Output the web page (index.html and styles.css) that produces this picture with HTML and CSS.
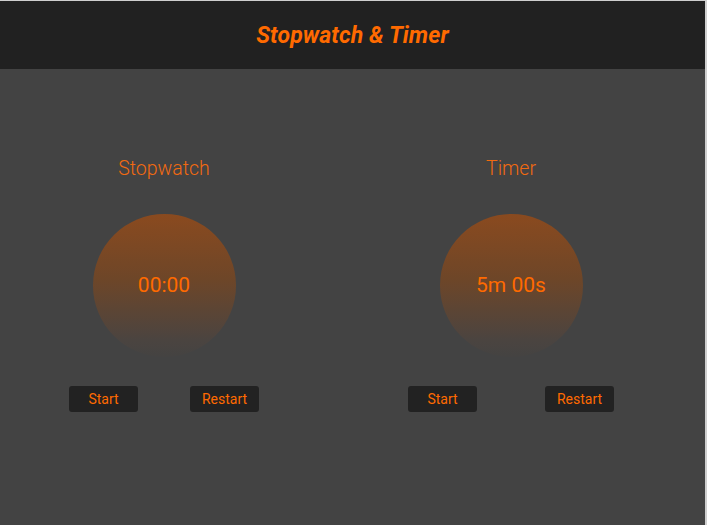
FILE: index.html
```html
<!DOCTYPE html>
<html lang="en">
<head>
<meta charset="utf-8">
<title>Stopwatch & Timer</title>
<link rel="stylesheet" href="styles.css">
</head>
<body>
<div class="app">
  <header class="topbar">
    <h1 class="title">Stopwatch &amp; Timer</h1>
  </header>
  <main class="panels">
    <section class="panel panel-stopwatch">
      <h2 class="panel-title">Stopwatch</h2>
      <div class="dial"><span class="dial-text">00:00</span></div>
      <div class="actions">
        <button class="btn">Start</button>
        <button class="btn">Restart</button>
      </div>
    </section>
    <section class="panel panel-timer">
      <h2 class="panel-title">Timer</h2>
      <div class="dial"><span class="dial-text">5m 00s</span></div>
      <div class="actions">
        <button class="btn">Start</button>
        <button class="btn">Restart</button>
      </div>
    </section>
  </main>
</div>
</body>
</html>
```
FILE: styles.css
```css
* { box-sizing: border-box; }
html, body { margin: 0; padding: 0; height: 100%; }
body {
  background: #cfcfcf;
  font-family: Roboto, "Liberation Sans", sans-serif;
  padding-top: 1px;
}
.app {
  width: 705px;
  height: 524px;
  display: flex;
  flex-direction: column;
  background: #434343;
}
.topbar {
  height: 68px;
  background: #212121;
  display: flex;
  align-items: center;
  justify-content: center;
}
.title {
  margin: 0;
  font-size: 23px;
  font-weight: 700;
  font-style: italic;
  color: #ff6a00;
  letter-spacing: 0.1px;
}
.panels {
  flex: 1;
  display: flex;
  padding: 88px 0 0 43px;
  gap: 89px;
}
.panel {
  display: flex;
  flex-direction: column;
  align-items: center;
}
.panel-stopwatch { width: 242px; }
.panel-timer { width: 274px; }
.panel-title {
  margin: 0;
  font-size: 19.5px;
  line-height: 24px;
  font-weight: 300;
  color: #f26a10;
}
.dial {
  margin-top: 33px;
  width: 143px;
  height: 143px;
  border-radius: 50%;
  background: linear-gradient(180deg, #8a4a1f 0%, #6e4628 45%, #4b4440 88%, #444342 100%);
  display: flex;
  align-items: center;
  justify-content: center;
  padding-bottom: 2px;
}
.dial-text {
  font-size: 21px;
  color: #ff6a00;
}
.actions {
  margin-top: 29px;
  width: 100%;
  display: flex;
  justify-content: space-around;
}
.btn {
  width: 69px;
  height: 26px;
  border: none;
  border-radius: 3px;
  background: #222222;
  color: #ff6a00;
  font-family: Roboto, "Liberation Sans", sans-serif;
  font-size: 14px;
  padding: 0;
}
```
